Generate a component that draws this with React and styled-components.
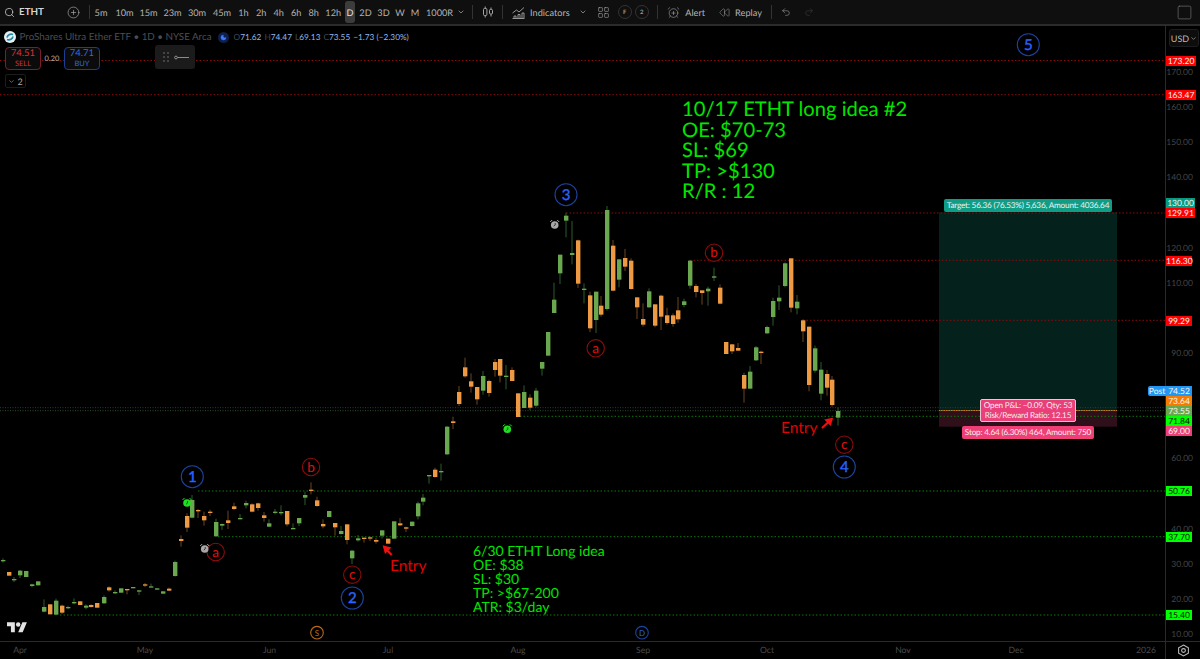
import React from "react";
import styled, { createGlobalStyle } from "styled-components";
import {
  Search, CirclePlus, LayoutGrid, AlarmClockPlus, Rewind, Undo2, Redo2, Square, ChevronDown, Moon,
} from "lucide-react";

const FONT = 'Lato, "Noto Sans", "DejaVu Sans", sans-serif';

const GlobalStyle = createGlobalStyle`
  html, body { margin: 0; padding: 0; background: #000; }
  body { font-family: ${FONT}; overflow: hidden; text-rendering: geometricPrecision; }
  #root { width: 1200px; height: 659px; }
`;

const Page = styled.div`
  width: 1200px;
  height: 659px;
  display: flex;
  flex-direction: column;
  background: #000;
`;

const TopBar = styled.div`
  height: 24px;
  flex: none;
  display: flex;
  align-items: center;
  background: #0f0f0f;
  border-bottom: 2px solid #2b2b2b;
  color: #b4b4b4;
  font-size: 9.2px;
  padding-left: 4px;
`;

const Symbol = styled.div`
  width: 62.5px;
  display: flex;
  align-items: center;
  gap: 4px;
  color: #d6d6d6;
  font-size: 9.8px;
  font-weight: 700;
`;

const AddButton = styled.div`
  width: 22px;
  display: flex;
  color: #bbb;
`;

const Sep = styled.div`
  width: 1px;
  height: 14px;
  background: #333;
  margin: 0 ${(p) => p.$gap ?? 4}px;
  flex: none;
`;

const Interval = styled.div`
  width: ${(p) => p.$w}px;
  height: 22px;
  display: flex;
  align-items: center;
  justify-content: center;
  flex: none;
  border-radius: 3px;
  white-space: nowrap;
  ${(p) => p.$active && "background: #3c3c3c; color: #e0e0e0; margin: 0 1px;"}
`;

const ToolItem = styled.div`
  display: flex;
  align-items: center;
  gap: ${(p) => p.$gap || 4}px;
  margin-left: ${(p) => p.$ml || 0}px;
  margin-right: ${(p) => p.$mr || 0}px;
  flex: none;
`;

const CandleIcon = styled.svg`
  margin-left: 2px;
  flex: none;
`;

const RoundBadge = styled.div`
  width: 14px;
  height: 14px;
  box-sizing: border-box;
  border: 1px solid #333;
  border-radius: 50%;
  display: flex;
  align-items: center;
  justify-content: center;
  font-size: 6px;
  font-weight: 700;
  margin-left: ${(p) => p.$ml || 0}px;
  color: #999;
  flex: none;
`;

const Spacer = styled.div`
  flex: 1;
`;

const LayoutBody = styled.div`
  flex: 1;
  display: flex;
  min-height: 0;
`;

const ChartPane = styled.div`
  position: relative;
  flex: 1;
  overflow: hidden;
`;

const ChartSvg = styled.svg`
  display: block;
  width: 100%;
  height: 100%;
`;

const Legend = styled.div`
  position: absolute;
  left: 4px;
  top: 4px;
  display: flex;
  flex-direction: column;
  align-items: flex-start;
`;

const LegendRow = styled.div`
  display: flex;
  align-items: center;
  height: 14px;
  white-space: nowrap;
  font-size: 9.8px;
`;

const LogoDot = styled.div`
  width: 12px;
  height: 12px;
  border-radius: 50%;
  background: #e8eef0;
  margin-right: 3.5px;
  display: flex;
  align-items: center;
  justify-content: center;
  flex: none;
`;

const LegendName = styled.span`
  color: #4a4e54;
`;

const MoonBadge = styled.div`
  width: 11px;
  height: 11px;
  border-radius: 50%;
  background: #0c1f4d;
  color: #3f7bff;
  margin: 0 5px 0 6px;
  display: flex;
  align-items: center;
  justify-content: center;
`;

const Ohlc = styled.span`
  color: #8fb6ea;
  font-size: 8.3px;
  margin-left: ${(p) => p.$ml || 0}px;
  i { color: #3f4a5a; font-style: normal; }
`;

const QuoteRow = styled.div`
  display: flex;
  align-items: center;
  margin-top: 3px;
`;

const QuoteBox = styled.div`
  width: 34px;
  height: 21px;
  border: 1px solid ${(p) => (p.$buy ? "#1c3d94" : "#7a1f2a")};
  border-radius: 4px;
  color: ${(p) => (p.$buy ? "#2f6bdc" : "#d4323b")};
  background: #0b0b0b;
  display: flex;
  flex-direction: column;
  align-items: center;
  justify-content: center;
  font-size: 9.5px;
  line-height: 10px;
  margin-left: 1px;
  small { font-size: 7.5px; line-height: 9px; }
`;

const Spread = styled.div`
  width: 22px;
  text-align: center;
  font-size: 7.5px;
  color: #aaa;
`;

const Collapse = styled.div`
  margin-top: 4px;
  margin-left: 1px;
  width: 19px;
  height: 12px;
  border: 1px solid #1c1c1c;
  border-radius: 2px;
  display: flex;
  align-items: center;
  justify-content: center;
  gap: 2px;
  color: #aaa;
  font-size: 9px;
`;

const FloatTool = styled.div`
  position: absolute;
  left: 155px;
  top: 19px;
  width: 40px;
  height: 24px;
  border-radius: 3px;
  background: #1b1b1b;
  display: flex;
  align-items: center;
  justify-content: space-around;
  padding: 0 4px 0 5px;
  box-sizing: border-box;
`;

const DragDots = styled.div`
  width: 6px;
  display: grid;
  grid-template-columns: 2px 2px;
  gap: 2px;
  i { width: 2px; height: 2px; background: #444; }
`;

const Note = styled.div`
  position: absolute;
  left: ${(p) => p.$left}px;
  top: ${(p) => p.$top}px;
  color: #00e600;
  font-size: ${(p) => p.$size}px;
  line-height: ${(p) => p.$lh}px;
  white-space: nowrap;
`;

const EntryText = styled.div`
  position: absolute;
  left: ${(p) => p.$left}px;
  top: ${(p) => p.$top}px;
  color: #e00404;
  font-size: 15.5px;
  line-height: 16px;
`;

const PosLabel = styled.div`
  position: absolute;
  left: ${(p) => p.$left}px;
  top: ${(p) => p.$top}px;
  width: ${(p) => p.$w}px;
  background: ${(p) => p.$bg};
  color: #f0f0f0;
  font-size: 8.2px;
  letter-spacing: -0.2px;
  line-height: ${(p) => (p.$boxed ? "9.5px" : "13px")};
  border-radius: 2px;
  text-align: center;
  white-space: nowrap;
  box-sizing: border-box;
  ${(p) => p.$boxed && "border: 1px solid #e9c8d2; padding: 1px 0;"}
`;

const PriceAxis = styled.div`
  position: relative;
  width: 34px;
  flex: none;
  border-left: 1px solid #2a2a2a;
  font-size: 8.5px;
`;

const CurrencyBtn = styled.div`
  position: absolute;
  left: 3px;
  top: 3px;
  width: 28px;
  height: 16px;
  border: 1px solid #1d1d1d;
  border-radius: 3px;
  background: #0d0d0d;
  color: #bbb;
  display: flex;
  align-items: center;
  justify-content: center;
  gap: 1px;
  font-size: 9px;
`;

const Tick = styled.div`
  position: absolute;
  right: 7px;
  color: #454545;
  line-height: 10px;
`;

const PriceTag = styled.div`
  position: absolute;
  left: 0;
  width: ${(p) => p.$w || 26}px;
  height: 10px;
  line-height: 10px;
  text-align: center;
  box-sizing: border-box;
  background: ${(p) => p.$bg};
  color: ${(p) => p.$fg || "#f4f4f4"};
`;

const PostTag = styled.div`
  position: absolute;
  left: -18px;
  width: 18px;
  height: 10px;
  line-height: 10px;
  text-align: center;
  background: #2196f3;
  color: #f4f4f4;
  border-radius: 2px 0 0 2px;
`;

const TimeAxis = styled.div`
  height: 17px;
  flex: none;
  display: flex;
  border-top: 1px solid #2a2a2a;
`;

const TimeScale = styled.div`
  position: relative;
  flex: 1;
  font-size: 8.6px;
  color: #4a4a4a;
  line-height: 17px;
`;

const TimeLabel = styled.span`
  position: absolute;
  top: 0;
  transform: translateX(-50%);
`;

const AxisCorner = styled.div`
  width: 34px;
  flex: none;
  border-left: 1px solid #2a2a2a;
  display: flex;
  align-items: center;
  justify-content: center;
  color: #bbb;
`;

// rows: [center x, body top, body bottom, wick top, wick bottom, colour], read at 3x from (x0, y0)
const fromZoom = (x0, y0, rows) =>
  rows.map(([cx, bt, bb, wt, wb, c]) => ({
    x: x0 + cx / 3,
    bodyTop: y0 + bt / 3,
    bodyBottom: y0 + bb / 3,
    wickTop: y0 + wt / 3,
    wickBottom: y0 + wb / 3,
    up: c === "g",
  }));

const candles = [
  ...fromZoom(0, 460, [
    [8, 300, 302, 295, 308, "g"], [26, 336, 347, 336, 347, "o"], [43, 357, 360, 351, 366, "g"],
    [61, 332, 346, 330, 354, "g"], [79, 333, 351, 333, 351, "g"], [97, 373, 378, 371, 382, "g"],
    [115, 364, 376, 364, 376, "g"], [132, 441, 455, 418, 457, "g"], [150, 433, 463, 433, 463, "o"],
    [168, 422, 464, 416, 466, "g"], [186, 437, 458, 434, 462, "o"], [204, 441, 443, 437, 448, "g"],
    [222, 426, 430, 415, 433, "g"], [240, 424, 435, 424, 435, "o"], [258, 437, 443, 433, 448, "g"],
    [274, 435, 441, 433, 443, "o"], [292, 429, 443, 429, 443, "o"], [311, 411, 430, 406, 431, "g"],
    [328, 382, 391, 379, 395, "o"], [346, 396, 400, 391, 402, "g"], [364, 385, 398, 385, 398, "g"],
    [382, 387, 389, 387, 403, "o"], [400, 381, 384, 381, 384, "g"], [417, 391, 394, 391, 405, "g"],
    [435, 373, 376, 369, 381, "o"], [452, 379, 381, 371, 381, "g"], [470, 385, 389, 385, 389, "g"],
    [488, 394, 401, 394, 401, "g"], [506, 386, 392, 383, 393, "o"], [524, 306, 348, 302, 350, "g"],
    [542, 237, 243, 226, 260, "o"], [560, 168, 203, 160, 216, "o"], [577, 120, 173, 105, 175, "g"],
    [595, 150, 154, 147, 174, "o"], [613, 168, 181, 155, 197, "o"], [631, 155, 159, 149, 168, "o"],
    [648, 186, 229, 176, 230, "g"], [666, 192, 197, 190, 210, "g"], [684, 181, 189, 152, 207, "o"],
    [702, 139, 147, 128, 150, "o"], [720, 174, 176, 162, 178, "g"], [737, 129, 136, 122, 145, "g"],
    [755, 133, 155, 130, 157, "o"], [773, 130, 144, 128, 152, "o"], [791, 166, 174, 156, 185, "o"],
    [808, 190, 200, 178, 201, "g"], [826, 155, 158, 147, 163, "g"], [844, 156, 160, 136, 166, "g"],
    [862, 153, 193, 153, 199, "o"], [880, 204, 206, 190, 207, "g"], [896, 174, 190, 174, 198, "g"],
  ]),
  ...fromZoom(300, 400, [
    [14, 285, 293, 275, 315, "g"], [32, 269, 272, 247, 283, "o"], [50, 301, 318, 290, 320, "o"],
    [68, 372, 379, 358, 385, "o"], [86, 333, 351, 333, 351, "g"], [104, 369, 382, 369, 407, "o"],
    [122, 393, 402, 378, 404, "g"], [140, 373, 420, 373, 433, "o"], [157, 452, 475, 450, 492, "g"],
    [175, 415, 421, 405, 425, "g"], [193, 413, 417, 413, 428, "o"], [210, 412, 414, 409, 423, "o"],
    [228, 420, 425, 414, 431, "o"], [246, 391, 407, 391, 416, "g"], [264, 416, 431, 416, 431, "o"],
    [281, 364, 416, 364, 416, "g"], [299, 370, 376, 354, 378, "o"], [317, 382, 386, 380, 396, "o"],
    [335, 365, 378, 365, 380, "g"], [353, 310, 349, 305, 358, "g"], [370, 293, 305, 282, 316, "g"],
    [388, 225, 229, 225, 251, "g"], [406, 209, 231, 203, 233, "o"], [424, 213, 217, 191, 242, "g"],
    [442, 80, 163, 78, 165, "g"], [459, 64, 69, 50, 87, "o"],
  ]),
  ...fromZoom(440, 340, [
    [57, 156, 192, 138, 198, "o"], [75, 82, 109, 53, 113, "o"], [92, 124, 140, 100, 158, "o"],
    [110, 141, 178, 141, 194, "o"], [128, 108, 152, 93, 164, "g"], [146, 123, 159, 119, 170, "o"],
    [164, 66, 90, 57, 110, "o"], [181, 57, 107, 57, 127, "o"], [199, 107, 111, 75, 148, "g"],
    [217, 90, 123, 82, 123, "o"], [235, 160, 231, 160, 231, "o"], [252, 156, 204, 136, 204, "g"],
    [270, 173, 203, 163, 210, "o"], [288, 152, 197, 144, 202, "g"], [306, 66, 86, 66, 107, "g"],
  ]),
  ...fromZoom(530, 170, [
    [53, 486, 557, 486, 557, "g"], [71, 389, 429, 338, 429, "g"], [89, 254, 310, 254, 342, "g"],
    [107, 137, 152, 128, 202, "g"], [125, 249, 255, 153, 283, "g"], [143, 211, 341, 209, 354, "o"],
    [161, 356, 360, 340, 400, "g"], [179, 376, 475, 365, 486, "o"], [197, 365, 450, 365, 489, "g"],
    [214, 407, 434, 378, 440, "o"], [232, 120, 417, 108, 422, "g"], [250, 227, 362, 210, 364, "o"],
    [268, 268, 329, 268, 352, "g"], [285, 264, 290, 237, 303, "o"], [303, 272, 357, 265, 359, "o"],
    [321, 382, 412, 382, 447, "o"], [339, 447, 464, 400, 470, "o"], [357, 364, 412, 355, 414, "g"],
    [374, 403, 467, 403, 472, "o"], [392, 377, 440, 374, 480, "o"], [410, 436, 459, 413, 464, "o"],
    [428, 436, 462, 430, 470, "o"], [445, 421, 448, 381, 458, "o"], [463, 394, 405, 386, 412, "g"],
    [481, 272, 347, 270, 356, "g"], [499, 348, 366, 342, 382, "o"], [516, 361, 369, 361, 404, "o"],
    [534, 356, 364, 350, 407, "g"], [552, 319, 323, 293, 333, "g"], [570, 353, 401, 343, 403, "o"],
  ]),
  ...fromZoom(700, 230, [
    [78, 336, 372, 336, 372, "o"], [95, 343, 364, 343, 372, "o"], [113, 354, 362, 339, 362, "o"],
    [131, 435, 476, 428, 518, "o"], [149, 425, 476, 408, 476, "g"], [167, 352, 391, 348, 393, "g"],
    [184, 365, 369, 362, 402, "o"], [202, 291, 310, 287, 312, "g"], [220, 213, 261, 203, 287, "g"],
    [238, 203, 214, 166, 240, "g"], [255, 100, 168, 97, 172, "g"], [273, 85, 233, 85, 247, "o"],
    [291, 215, 235, 195, 253, "g"], [308, 271, 304, 268, 336, "o"], [326, 290, 465, 290, 484, "o"],
    [344, 355, 422, 347, 428, "g"], [362, 419, 491, 396, 511, "g"], [380, 432, 473, 420, 497, "o"],
    [397, 449, 525, 438, 530, "o"], [415, 543, 563, 532, 587, "g"],
  ]),
];

const redLines = [[0, 60.5], [0, 94.7], [566, 213], [690, 260.3], [803, 320.3]];
const greenLines = [[520, 416.3], [198, 491], [218, 536.7], [60, 615]];

const blueCircles = [[192.3, 476.7, "1"], [352.3, 598, "2"], [566, 194.7, "3"], [844.3, 467, "4"], [1028.3, 44.7, "5"]];
const redCircles = [
  [215.7, 552, "a"], [311, 467, "b"], [352.3, 574.7, "c"],
  [595.7, 348.3, "a"], [714, 252.7, "b"], [844.3, 444.7, "c"],
];
const alarms = [[187, 503, "#1fe01f"], [204.7, 549, "#a8a8a8"], [554.7, 225, "#a8a8a8"], [507.3, 429.3, "#1fe01f"]];

const ticks = [170, 160, 150, 140, 120, 110, 90, 60, 40, 30, 20, 10];
const priceY = (p) => 247.5 + (120 - p) * 3.515;

const tags = [
  ["173.20", 55.5, "#ff0000", null, 30],
  ["163.47", 90, "#ff0000", null, 30],
  ["130.00", 197.5, "#089981", null, 29],
  ["129.91", 208, "#ff0000", null, 29],
  ["116.30", 255.5, "#ff0000"],
  ["99.29", 315.5, "#ff0000"],
  ["74.52", 386, "#2196f3"],
  ["73.64", 396, "#f57c00"],
  ["73.55", 406, "#6aa84f"],
  ["71.84", 416, "#00ff00", "#0a0a0a"],
  ["69.00", 426, "#ef3f76"],
  ["50.76", 486, "#00ff00", "#0a0a0a"],
  ["37.70", 532, "#00ff00", "#0a0a0a"],
  ["15.40", 610, "#00ff00", "#0a0a0a"],
];

const months = [["Apr", 20], ["May", 145], ["Jun", 269.5], ["Jul", 388], ["Aug", 518], ["Sep", 643], ["Oct", 767], ["Nov", 903], ["Dec", 1016], ["2026", 1146]];

const intervals = [
  ["5m", 23], ["10m", 24], ["15m", 24], ["23m", 24], ["30m", 25], ["45m", 25], ["1h", 18], ["2h", 17.5], ["4h", 17.5], ["6h", 17.5], ["8h", 17.5], ["12h", 21.5],
];
const intervals2 = [["2D", 19], ["3D", 17], ["W", 16], ["M", 14]];

function CandleMark({ c }) {
  const x = Math.round(c.x);
  const h = Math.max(c.bodyBottom - c.bodyTop, 1.3);
  return (
    <g>
      <rect x={x - 0.5} y={c.wickTop} width="1" height={c.wickBottom - c.wickTop} fill={c.up ? "#2c5a2c" : "#6b4520"} />
      <rect x={x - 2} y={c.bodyTop} width="4.4" height={h} fill={c.up ? "#6aa84f" : "#ee9a45"} />
    </g>
  );
}

function AlarmMark({ x, y, color }) {
  return (
    <g>
      <path d={`M${x - 4.5} ${y - 3}l2 -2M${x + 4.5} ${y - 3}l-2 -2`} stroke={color} strokeWidth="1" />
      <circle cx={x} cy={y} r="3.8" fill={color} />
      <path d={`M${x + 0.5} ${y - 2}v2l-1.5 1.2`} stroke="#0a2a0a" strokeWidth="0.8" fill="none" />
    </g>
  );
}

function Chart() {
  return (
    <ChartSvg viewBox="0 26 1165 615" preserveAspectRatio="none">
      <rect x="939" y="212.3" width="178" height="198.2" fill="#05211c" />
      <rect x="939" y="410.5" width="178" height="16.2" fill="#2e0f1a" />
      <line x1="939" x2="1117" y1="410.5" y2="410.5" stroke="#c9781c" strokeWidth="1" />

      <line x1="0" x2="1165" y1="407.7" y2="407.7" stroke="#1d4258" strokeDasharray="1 1.5" />
      <line x1="0" x2="1165" y1="410.7" y2="410.7" stroke="#2f4a2b" strokeDasharray="1 1.5" />

      {redLines.map(([x, y]) => (
        <line key={y} x1={x} x2="1165" y1={y} y2={y} stroke="#8d0b0b" strokeDasharray="1.5 2" />
      ))}
      {greenLines.map(([x, y]) => (
        <line key={y} x1={x} x2="1165" y1={y} y2={y} stroke="#0b7a0b" strokeDasharray="1.5 2" />
      ))}

      {candles.map((c, i) => <CandleMark key={i} c={c} />)}

      {blueCircles.map(([x, y, t]) => (
        <g key={t}>
          <circle cx={x} cy={y} r="11" fill="#000" stroke="#1d439f" strokeWidth="1.1" />
          <text x={x} y={y + 5.3} textAnchor="middle" fontSize="15" stroke="#2962ff" strokeWidth="0.4" fill="#2962ff" fontFamily={FONT}>{t}</text>
        </g>
      ))}
      {redCircles.map(([x, y, t]) => (
        <g key={x}>
          <circle cx={x} cy={y} r="8.7" fill="#000" stroke="#8d0b0b" strokeWidth="1.1" />
          <text x={x} y={y + 4.5} textAnchor="middle" fontSize="13.5" fill="#e01010" fontFamily={FONT}>{t}</text>
        </g>
      ))}

      {alarms.map(([x, y, color]) => <AlarmMark key={x} x={x} y={y} color={color} />)}

      <path d="M391.7 555L385.5 548.5M384 546.7l5.5 1.3l-4 4z" stroke="#f01010" strokeWidth="2" fill="#f01010" />
      <path d="M822 428L829.5 421M831.7 419l-5.5 1.2l4 4z" stroke="#f01010" strokeWidth="2" fill="#f01010" />

      <circle cx="317" cy="632.7" r="6.3" fill="none" stroke="#b96b12" strokeWidth="1.1" />
      <text x="317" y="635.5" textAnchor="middle" fontSize="8" fill="#c47512" fontFamily={FONT}>S</text>
      <circle cx="642" cy="632.7" r="6.3" fill="none" stroke="#1d439f" strokeWidth="1.1" />
      <text x="642" y="635.5" textAnchor="middle" fontSize="8" fill="#2f63d8" fontFamily={FONT}>D</text>

      <g transform="translate(7 620) scale(0.56)" fill="#e2e2e2">
        <path d="M14 22H7V11H0V4h14v18zM28 22h-8l7.5-18h8L28 22z" />
        <circle cx="20" cy="8" r="4" />
      </g>
    </ChartSvg>
  );
}

function App() {
  return (
    <Page>
      <GlobalStyle />
      <TopBar>
        <Symbol><Search size={11} strokeWidth={1.6} /><span>ETHT</span></Symbol>
        <AddButton><CirclePlus size={13} strokeWidth={1.1} /></AddButton>
        <Sep $gap={0} />
        {intervals.map(([t, w]) => <Interval key={t} $w={w}>{t}</Interval>)}
        <Interval $active $w={10}>D</Interval>
        {intervals2.map(([t, w]) => <Interval key={t} $w={w}>{t}</Interval>)}
        <ToolItem $gap={4} $ml={4}>1000R<ChevronDown size={8} /></ToolItem>
        <Sep $gap={7} />
        <CandleIcon width="12" height="12" viewBox="0 0 12 12" fill="none" stroke="#a5a5a5" strokeWidth="1">
          <rect x="1.5" y="2.5" width="3.4" height="7" rx="1" />
          <path d="M3.2 .5v2M3.2 9.5v2M9 1.5v2M9 8v2.5" />
          <rect x="7.5" y="3.5" width="3" height="4.5" rx="1" />
        </CandleIcon>
        <Sep $gap={8} />
        <ToolItem $gap={5} $ml={1}>
          <svg width="13" height="13" viewBox="0 0 13 13" fill="none" stroke="#a5a5a5" strokeWidth="0.9">
            <path d="M.5 7l4-3l2.5 2l5-4.5" />
            <path d="M.5 12.5h12M2 12V10h2v2M6 12V8.5h2V12M10 12V7h2v5" />
          </svg>
          Indicators
        </ToolItem>
        <ToolItem $ml={9}><ChevronDown size={8} /></ToolItem>
        <ToolItem $ml={10.5}><LayoutGrid size={13} strokeWidth={1} /></ToolItem>
        <RoundBadge $ml={7.5}>F</RoundBadge>
        <RoundBadge $ml={3}>2</RoundBadge>
        <Sep $gap={8.5} />
        <ToolItem $gap={5.5}><AlarmClockPlus size={13} strokeWidth={1} />Alert</ToolItem>
        <ToolItem $gap={5.5} $ml={13.5}><Rewind size={11} strokeWidth={1} />Replay</ToolItem>
        <Sep $gap={9} />
        <ToolItem><Undo2 size={10} strokeWidth={1.2} /></ToolItem>
        <ToolItem $ml={13}><Redo2 size={10} strokeWidth={1.2} color="#444" /></ToolItem>
        <Spacer />
        <ToolItem $mr={7.5}><Square size={17} strokeWidth={0.9} color="#777" /></ToolItem>
      </TopBar>

      <LayoutBody>
        <ChartPane>
          <Chart />
          <Legend>
            <LegendRow>
              <LogoDot>
                <svg width="8" height="8" viewBox="0 0 8 8" fill="none" stroke="#1e88a8" strokeWidth="1.6">
                  <path d="M7 1.5C4 .5 1.5 2 1 4.5M1 6.5c3 1 5.5-.5 6-3" />
                </svg>
              </LogoDot>
              <LegendName>ProShares Ultra Ether ETF • 1D • NYSE Arca</LegendName>
              <MoonBadge><Moon size={7} fill="#3f7bff" strokeWidth={1} /></MoonBadge>
              <Ohlc><i>O</i>71.62</Ohlc>
              <Ohlc $ml={3}><i>H</i>74.47</Ohlc>
              <Ohlc $ml={3}><i>L</i>69.13</Ohlc>
              <Ohlc $ml={3}><i>C</i>73.55</Ohlc>
              <Ohlc $ml={3}>−1.73 (−2.30%)</Ohlc>
            </LegendRow>
            <QuoteRow>
              <QuoteBox>74.51<small>SELL</small></QuoteBox>
              <Spread>0.20</Spread>
              <QuoteBox $buy>74.71<small>BUY</small></QuoteBox>
            </QuoteRow>
            <Collapse><ChevronDown size={7} />2</Collapse>
          </Legend>

          <FloatTool>
            <DragDots><i /><i /><i /><i /><i /><i /></DragDots>
            <svg width="15" height="5" viewBox="0 0 15 5" fill="none" stroke="#999" strokeWidth="0.9">
              <circle cx="2" cy="2.5" r="1.4" />
              <path d="M3.5 2.5H15" />
            </svg>
          </FloatTool>

          <Note $left={682} $top={73} $size={20.2} $lh={20.5}>
            10/17 ETHT long idea #2<br />OE: $70-73<br />SL: $69<br />TP: &gt;$130<br />R/R : 12
          </Note>
          <Note $left={473} $top={518} $size={14} $lh={14}>
            6/30 ETHT Long idea<br />OE: $38<br />SL: $30<br />TP: &gt;$67-200<br />ATR: $3/day
          </Note>
          <EntryText $left={390} $top={532}>Entry</EntryText>
          <EntryText $left={781} $top={394}>Entry</EntryText>

          <PosLabel $left={944} $top={173} $w={168} $bg="#0f9e85">Target: 56.36 (76.53%) 5,636, Amount: 4036.64</PosLabel>
          <PosLabel $boxed $left={980} $top={373} $w={96} $bg="#ea3f78">Open P&amp;L: −0.09, Qty: 53<br />Risk/Reward Ratio: 12.15</PosLabel>
          <PosLabel $left={962} $top={400} $w={132} $bg="#ef3f76">Stop: 4.64 (6.30%) 464, Amount: 750</PosLabel>
        </ChartPane>

        <PriceAxis>
          <CurrencyBtn>USD<ChevronDown size={7} /></CurrencyBtn>
          {ticks.map((p) => (
            <Tick key={p} style={{ top: priceY(p) - 31 }}>{p.toFixed(2)}</Tick>
          ))}
          {tags.map(([t, top, bg, fg, w]) => (
            <PriceTag key={t} $bg={bg} $fg={fg} $w={w} style={{ top: top - 26 }}>{t}</PriceTag>
          ))}
          <PostTag style={{ top: 360 }}>Post</PostTag>
        </PriceAxis>
      </LayoutBody>

      <TimeAxis>
        <TimeScale>
          {months.map(([m, x]) => (
            <TimeLabel key={m} style={{ left: x }}>{m}</TimeLabel>
          ))}
        </TimeScale>
        <AxisCorner>
          <svg width="13" height="13" viewBox="0 0 24 24" fill="none" stroke="#bbb" strokeWidth="2">
            <path d="M12 2l9 5v10l-9 5l-9-5V7z" />
            <circle cx="12" cy="12" r="3.5" />
          </svg>
        </AxisCorner>
      </TimeAxis>
    </Page>
  );
}

export default App;
